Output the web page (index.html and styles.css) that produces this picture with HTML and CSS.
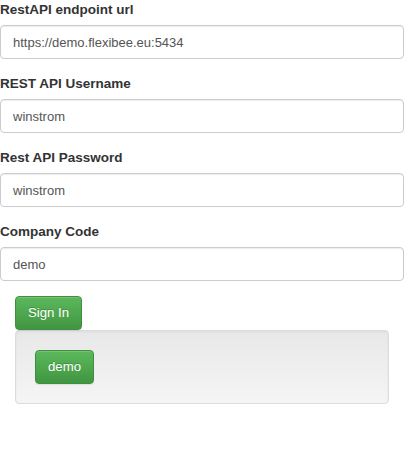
FILE: index.html
```html
<!DOCTYPE html>
<html>
<head>
<meta charset="utf-8">
<link rel="stylesheet" href="styles.css">
</head>
<body>
<form class="login-form">
  <div class="form-group">
    <label class="form-label">RestAPI endpoint url</label>
    <input class="form-control" type="text" value="https://demo.flexibee.eu:5434">
  </div>
  <div class="form-group">
    <label class="form-label">REST API Username</label>
    <input class="form-control" type="text" value="winstrom">
  </div>
  <div class="form-group">
    <label class="form-label">Rest API Password</label>
    <input class="form-control" type="text" value="winstrom">
  </div>
  <div class="form-group">
    <label class="form-label">Company Code</label>
    <input class="form-control" type="text" value="demo">
  </div>
  <div class="container">
    <button class="btn btn-success" type="button">Sign In</button>
    <div class="well">
      <button class="btn btn-success" type="button">demo</button>
    </div>
  </div>
</form>
</body>
</html>
```

FILE: styles.css
```css
* { box-sizing: border-box; }
html, body { margin: 0; padding: 0; background: #fff; }
body {
  font-family: "Liberation Sans", Arial, sans-serif;
  font-size: 14px;
  line-height: 20px;
  color: #333;
}
.login-form { margin: 0; }
.form-group { margin-bottom: 15px; }
.form-label {
  display: block;
  font-size: 13.5px;
  font-weight: bold;
  margin-bottom: 5px;
  max-width: 100%;
}
.form-control {
  display: block;
  width: 100%;
  height: 34px;
  padding: 6px 12px;
  font-family: inherit;
  font-size: 13px;
  line-height: 20px;
  color: #555;
  background: #fff;
  border: 1px solid #ccc;
  border-radius: 4px;
  box-shadow: inset 0 1px 1px rgba(0,0,0,.075);
  margin: 0;
}
.container { padding: 0 15px; }
.btn {
  display: inline-block;
  height: 34px;
  padding: 6px 12px;
  font-family: inherit;
  font-size: 13.2px;
  line-height: 20px;
  border-radius: 4px;
  cursor: pointer;
  vertical-align: top;
  margin: 0;
}
.btn-success {
  color: #fff;
  text-shadow: 0 -1px 0 rgba(0,0,0,.2);
  background-image: linear-gradient(to bottom, #5cb85c 0, #419641 100%);
  border: 1px solid #3e8f3e;
  box-shadow: inset 0 1px 0 rgba(255,255,255,.15), 0 1px 1px rgba(0,0,0,.075);
}
.well {
  min-height: 20px;
  padding: 19px;
  margin-bottom: 20px;
  background-image: linear-gradient(to bottom, #e8e8e8 0, #f5f5f5 100%);
  border: 1px solid #dcdcdc;
  border-radius: 4px;
  box-shadow: inset 0 1px 3px rgba(0,0,0,.05), 0 1px 0 rgba(255,255,255,.1);
}
```
